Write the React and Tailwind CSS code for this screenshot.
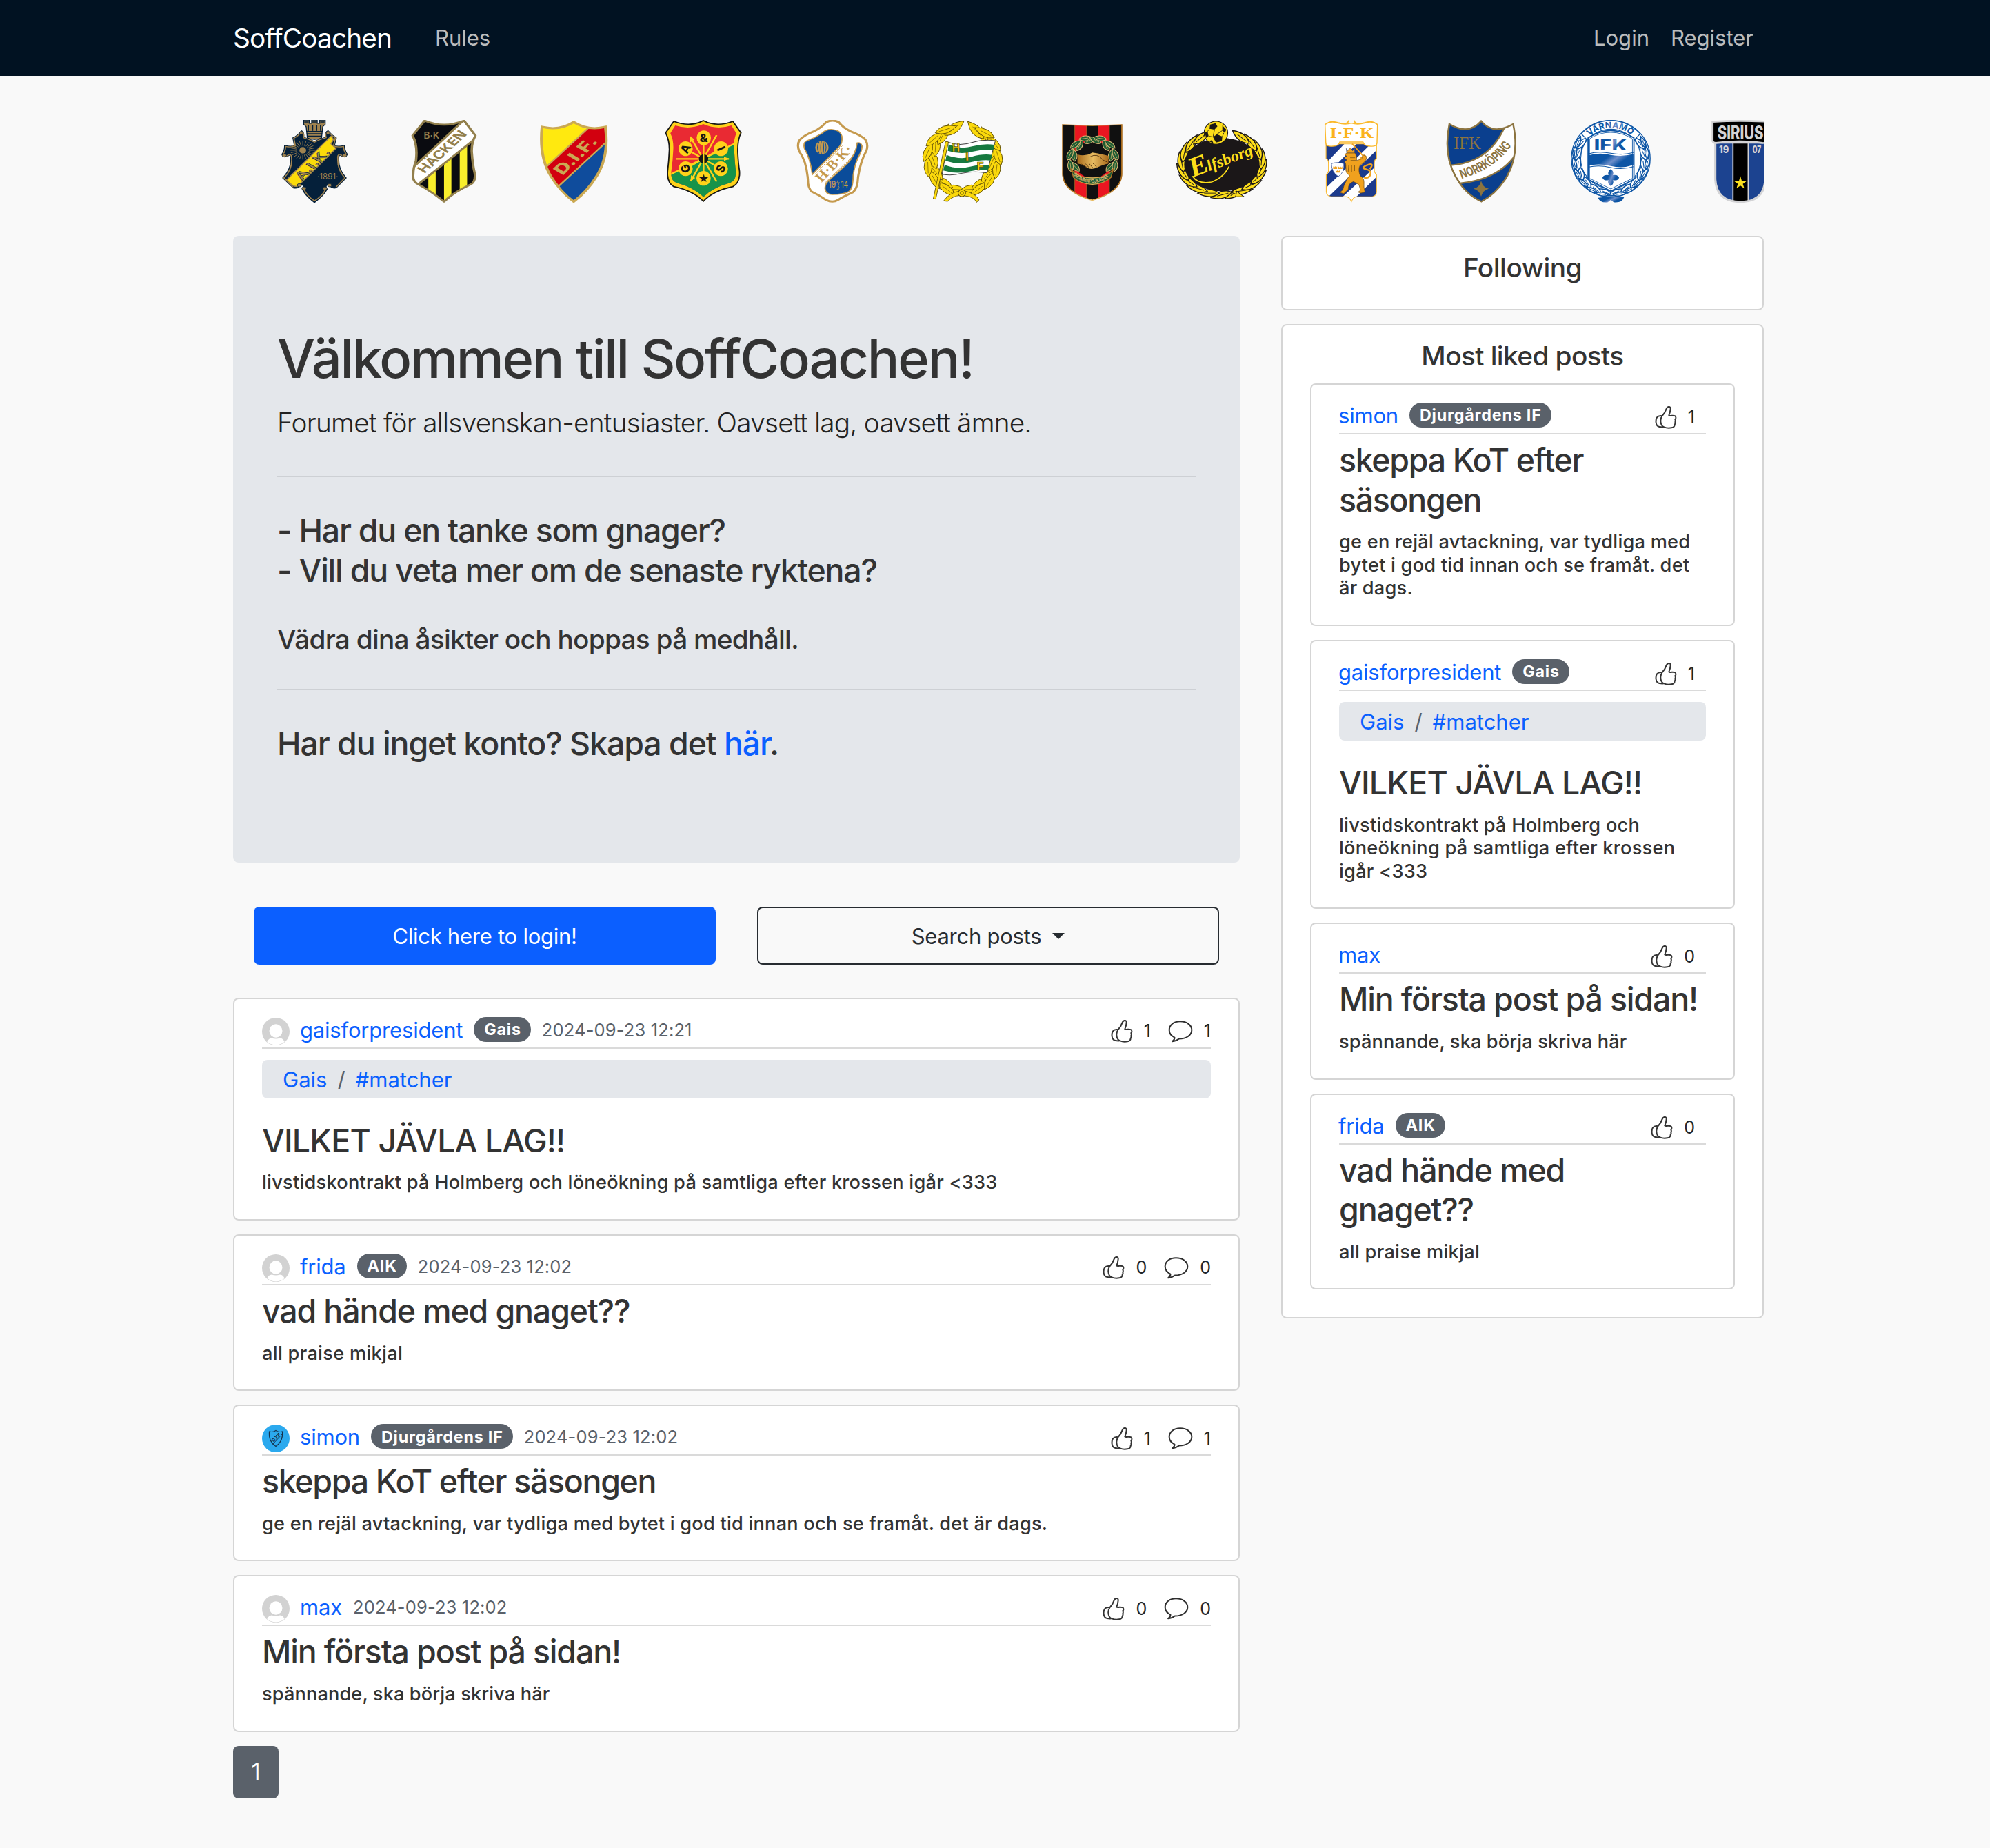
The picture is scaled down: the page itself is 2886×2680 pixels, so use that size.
import { Fragment } from 'react';

/* ---------- Club crests ---------- */

const SANS = 'Inter, "Liberation Sans", sans-serif';
const SERIF = '"Liberation Serif", serif';

function Crest({ box, label, children }) {
  return (
    <svg
      viewBox={box}
      preserveAspectRatio="none"
      className="h-[120px] w-[188px] shrink-0 overflow-visible"
      role="img"
      aria-label={label}
    >
      {children}
    </svg>
  );
}

/* Leaves laid out along an ellipse; `lean` tilts each leaf from the tangent. */
function Leaves({ cx, cy, rx, ry, from, to, count, length, width, lean = 0, ...paint }) {
  const items = [];
  for (let i = 0; i < count; i += 1) {
    const a = ((from + ((to - from) * i) / Math.max(1, count - 1)) * Math.PI) / 180;
    const x = cx + rx * Math.cos(a);
    const y = cy + ry * Math.sin(a);
    const dir = to > from ? 1 : -1;
    const t = (Math.atan2(dir * ry * Math.cos(a), -dir * rx * Math.sin(a)) * 180) / Math.PI + lean;
    items.push(
      <g key={i} transform={`translate(${x.toFixed(1)} ${y.toFixed(1)}) rotate(${t.toFixed(1)})`}>
        <path
          d={`M${-length / 2} 0 Q${-length * 0.1} ${-width} ${length / 2} 0 Q${-length * 0.1} ${width} ${-length / 2} 0Z`}
          {...paint}
        />
        <path d={`M${-length / 3} 0 L${length / 5} 0`} fill="none" stroke={paint.stroke} strokeWidth={paint.strokeWidth * 0.7} />
      </g>,
    );
  }
  return <>{items}</>;
}

function Aik() {
  const gold = '#a08350';
  const navy = '#05203a';
  const rays = Array.from({ length: 24 }, (_, i) => i * 15);
  return (
    <Crest box="71.4 522 421.1 360" label="AIK">
      <path d="M247 523h18v14h8v-14h18v14h8v-14h18v18l-8 10-4 49q-22 14-46 0l-4-49-8-10z" fill={gold} stroke={navy} strokeWidth="3" />
      <path d="M249 531h14M274 531h16M301 531h14M257 572h50M257 582h50M258 592h47M262 545v24M276 545v24M289 545v24M302 545v24" stroke={navy} strokeWidth="4" fill="none" />
      <path
        d="M240 570Q248 574 246 598Q266 604 282 617Q298 604 320 598Q317 574 326 570Q338 590 352 600L346 634Q360 640 378 634Q380 658 388 672Q378 690 366 674Q360 672 360 690Q358 735 384 774L352 817Q338 822 328 800Q314 806 322 824Q310 852 282 880Q254 852 244 824Q252 806 238 800Q230 822 214 817L180 774Q208 735 206 690Q206 672 200 674Q186 690 177 672Q186 658 186 634Q206 640 218 634L213 600Q228 592 240 570Z"
        fill={navy} stroke={navy} strokeWidth="5"
      />
      <path
        d="M240 572Q250 580 246 599Q266 606 282 619Q298 606 320 599Q315 580 326 572Q338 590 350 601L344 635Q360 643 376 637Q378 660 386 672Q378 686 366 672Q356 670 358 692Q356 737 381 774L352 814M213 814L183 774Q210 737 208 692Q208 670 200 672Q186 686 179 672Q188 660 188 637Q206 643 220 635L215 601Q230 592 240 572M248 824Q258 852 282 874Q308 852 318 824"
        fill="none" stroke={gold} strokeWidth="4"
      />
      <g stroke={gold} strokeWidth="2">
        {rays.map((r) => (
          <path key={r} d="M0 -20V-40" transform={`translate(244 654) rotate(${r})`} />
        ))}
      </g>
      <ellipse cx="244" cy="654" rx="11" ry="14" fill={gold} />
      <path d="M192 782L336 592L344 606L336 626L352 646L226 812Q208 812 192 782Z" fill="#fbdb0a" stroke={gold} strokeWidth="4" />
      <text transform="translate(241 786) rotate(-53)" fontFamily={SANS} fontWeight="700" fontSize="44" textLength="156" lengthAdjust="spacingAndGlyphs" fill={gold} stroke={navy} strokeWidth="1.5">A.I.K.</text>
      <text x="291" y="779" fontFamily={SANS} fontSize="34" textLength="68" lengthAdjust="spacingAndGlyphs" fill={gold}>·1891·</text>
      <g fill={gold} stroke={navy} strokeWidth="2">
        <circle cx="239" cy="579" r="6" /><circle cx="326" cy="579" r="6" />
        <circle cx="184" cy="676" r="7" /><circle cx="380" cy="676" r="7" />
        <circle cx="233" cy="806" r="7" /><circle cx="331" cy="806" r="7" />
        <circle cx="248" cy="820" r="7" /><circle cx="316" cy="820" r="7" />
      </g>
    </Crest>
  );
}

function Hacken() {
  const outline = 'M640 525Q703 560 768 525L805 590Q792 620 793 660Q796 720 803 755Q806 790 790 802Q735 835 703 877Q665 835 618 801Q600 788 603 760Q603 730 612 700Q618 630 601 590Z';
  return (
    <Crest box="492.6 522 421.1 360" label="BK Häcken">
      <clipPath id="hacken-clip"><path d={outline} /></clipPath>
      <path d={outline} fill="#0a0b10" />
      <g clipPath="url(#hacken-clip)">
        <path d="M652 500h24v400h-24zM703 500h24v400h-24zM754 500h24v400h-24z" fill="#f9ee2c" />
        <path d="M590 500H780L600 730Z" fill="#0a0b10" />
        <path d="M590 744L768 522L815 592L617 804L585 790Z" fill="#fff" stroke="#93804d" strokeWidth="8" />
      </g>
      <path d={outline} fill="none" stroke="#93804d" strokeWidth="8" strokeLinejoin="round" />
      <text x="637" y="602" fontFamily={SANS} fontWeight="600" fontSize="38" textLength="51" lengthAdjust="spacingAndGlyphs" fill="#93804d">B·K</text>
      <text transform="translate(640 757) rotate(-51)" fontFamily={SANS} fontWeight="700" fontSize="48" textLength="222" lengthAdjust="spacingAndGlyphs" fill="#93804d">HÄCKEN</text>
    </Crest>
  );
}

function Djurgarden() {
  const outline = 'M1022 552Q1080 570 1125 531Q1170 570 1228 552Q1240 680 1200 765Q1170 832 1125 877Q1080 832 1050 765Q1012 680 1022 552Z';
  return (
    <Crest box="914.4 522 421.1 360" label="Djurgårdens IF">
      <clipPath id="dif-clip"><path d={outline} /></clipPath>
      <g clipPath="url(#dif-clip)">
        <path d="M1000 520h250v370h-250z" fill="#ffe90f" />
        <path d="M1240 610L1060 825V890H1250Z" fill="#0f4c9c" />
        <path d="M1178 550L1030 733L1072 815L1250 594V530Z" fill="#d2000f" stroke="#cba953" strokeWidth="6" />
      </g>
      <path d={outline} fill="none" stroke="#cba953" strokeWidth="9" />
      <text transform="translate(1089 765) rotate(-52)" fontFamily={SANS} fontWeight="800" fontSize="60" textLength="190" lengthAdjust="spacingAndGlyphs" fill="#cba953">D.I.F.</text>
    </Crest>
  );
}

function Gais() {
  const outline = 'M160 78Q225 105 280 75Q335 105 400 78L433 128Q418 160 420 215Q422 260 427 295Q430 345 400 362Q320 380 280 426Q240 380 160 362Q132 345 135 295Q140 250 142 200Q142 160 127 128Z';
  const inner = 'M166 96Q225 116 280 90Q335 116 394 96L414 130Q400 165 406 215Q408 260 412 295Q414 335 390 345Q320 365 280 407Q240 365 170 345Q146 335 150 295Q156 250 158 200Q160 160 146 130Z';
  const discs = [[282, 150, '&', 0], [352, 197, 'I', 64], [351, 284, 'S', -62], [281, 326, '★', 0], [208, 284, 'G', -116], [208, 197, 'A', -64]];
  return (
    <Crest box="16.8 72 526.4 360" label="Gais">
      <clipPath id="gais-clip"><path d={inner} /></clipPath>
      <path d={outline} fill="#ffd21a" stroke="#161616" strokeWidth="5" />
      <g clipPath="url(#gais-clip)">
        <path d="M130 80h300v350h-300z" fill="#e92a33" />
        <path d="M120 322L440 158V440H120Z" fill="#15934a" stroke="#ffd21a" strokeWidth="7" />
      </g>
      <path d="M170 241H384M227 145L334 340M334 138L229 338M281 150V326M208 197L351 284M352 197L208 284" stroke="#ffd21a" strokeWidth="7" />
      <path d="M386 241l-22-9v18zM224 140l2 30 18-13zM228 340l2-28 17 12z" fill="#ffd21a" />
      {discs.map(([x, y, t, r]) => (
        <g key={t}>
          <ellipse cx={x} cy={y} rx="29" ry="32" fill="#ffd21a" />
          <text transform={`translate(${x} ${y}) rotate(${r})`} y="17" textAnchor="middle" fontFamily={t === '★' ? '"DejaVu Sans", sans-serif' : SANS} fontWeight="800" fontSize="48" fill="#161616">{t}</text>
        </g>
      ))}
      <ellipse cx="281" cy="241" rx="19" ry="20" fill="#161616" />
      <path d="M281 222v38" stroke="#ffd21a" strokeWidth="6" />
    </Crest>
  );
}

function Halmstad() {
  const gold = '#c59a4e';
  return (
    <Crest box="544.7 72 526.4 360" label="Halmstads BK">
      <path d="M780 82Q806 68 832 82Q848 105 880 122Q925 140 940 158Q952 180 944 205Q920 250 910 320Q908 370 890 386Q850 405 828 420Q806 434 780 420Q755 400 722 384Q706 368 706 330Q700 250 672 210Q660 182 672 160Q690 138 730 122Q762 105 780 82Z" fill="#fff" stroke={gold} strokeWidth="9" />
      <path d="M697 165Q735 150 766 128Q780 112 806 114Q838 116 844 142Q848 170 834 188L724 309Q716 240 692 196Q686 176 697 165Z" fill="#0a4c9a" stroke={gold} strokeWidth="5" />
      <path d="M906 172Q922 168 926 186Q926 205 910 236Q896 268 890 312Q890 370 872 384Q850 396 806 396Q778 396 776 372Q774 350 792 334L866 262Q902 220 906 172Z" fill="#0a4c9a" stroke={gold} strokeWidth="5" />
      <ellipse cx="763" cy="192" rx="27" ry="30" fill={gold} />
      <path d="M752 166Q738 192 752 218M761 163Q755 192 761 221M774 166Q786 192 774 218M767 163Q773 192 767 221" stroke="#0a4c9a" strokeWidth="3" fill="none" />
      <path d="M735 308L846 184M776 345L896 222" stroke={gold} strokeWidth="2.5" />
      <text transform="translate(762 345) rotate(-48)" fontFamily={SERIF} fontWeight="700" fontSize="60" textLength="192" lengthAdjust="spacingAndGlyphs" fill={gold}>H·B·K·</text>
      <text x="790" y="367" fontFamily={SANS} fontWeight="500" fontSize="38" textLength="30" lengthAdjust="spacingAndGlyphs" fill={gold}>19</text>
      <text x="840" y="367" fontFamily={SANS} fontWeight="500" fontSize="38" textLength="30" lengthAdjust="spacingAndGlyphs" fill={gold}>14</text>
      <path d="M829 333q-6 8 0 12t0 12q8 6 0 18m-5-2h7M822 345h14" stroke={gold} strokeWidth="2.5" fill="none" />
    </Crest>
  );
}

function Hammarby() {
  const leaf = { fill: '#fbd90c', stroke: '#5a4a08', strokeWidth: 2.5 };
  return (
    <Crest box="1069.8 72 526.4 360" label="Hammarby IF">
      <Leaves cx={1333} cy={242} rx={122} ry={140} from={110} to={254} count={7} length={100} width={38} lean={-20} {...leaf} />
      <Leaves cx={1333} cy={242} rx={144} ry={146} from={118} to={242} count={6} length={92} width={32} lean={10} {...leaf} />
      <Leaves cx={1333} cy={242} rx={122} ry={140} from={70} to={-64} count={7} length={100} width={38} lean={20} {...leaf} />
      <Leaves cx={1333} cy={242} rx={144} ry={146} from={62} to={-52} count={6} length={92} width={32} lean={-10} {...leaf} />
      <path d="M1272 168Q1320 188 1370 170Q1420 155 1466 162L1432 302Q1380 292 1330 304Q1290 316 1250 308Z" fill="#fff" stroke="#444" strokeWidth="3" />
      <path d="M1276 178Q1325 202 1375 186Q1420 174 1462 180L1457 204Q1420 198 1372 210Q1325 224 1273 206ZM1268 224Q1320 246 1370 232Q1415 218 1453 224L1447 248Q1410 244 1365 256Q1315 268 1263 250ZM1260 268Q1310 288 1360 276Q1400 264 1442 268L1436 290Q1395 286 1355 297Q1305 308 1254 292Z" fill="#16793f" />
      <path d="M1264 166l12 2-52 248-10-2z" fill="#fbd90c" stroke="#5a4a08" strokeWidth="2.5" />
      <g fontFamily={SANS} fontWeight="800" fontSize="46" fill="#fbd90c" stroke="#4a3d08" strokeWidth="2">
        <text x="1291" y="211" textLength="31" lengthAdjust="spacingAndGlyphs">H</text>
        <text x="1345" y="250">I</text>
        <text x="1391" y="291" textLength="27" lengthAdjust="spacingAndGlyphs">F</text>
      </g>
      <path d="M1318 382Q1280 388 1256 424L1272 426Q1294 402 1324 400ZM1340 380Q1390 394 1400 420L1390 430Q1378 404 1340 402Z" fill="#fbd90c" stroke="#5a4a08" strokeWidth="2.5" />
      <circle cx="1330" cy="390" r="15" fill="#fbd90c" stroke="#5a4a08" strokeWidth="3" />
      <circle cx="1330" cy="390" r="7" fill="none" stroke="#5a4a08" strokeWidth="2" />
    </Crest>
  );
}

function Brommapojkarna() {
  const outline = 'M170 93Q290 98 410 93V305Q410 385 290 421Q170 385 170 305Z';
  const leaf = { fill: '#1f5c33', stroke: '#d9b875', strokeWidth: 3 };
  return (
    <Crest box="26.8 72 526.4 360" label="IF Brommapojkarna">
      <linearGradient id="bp-gold"><stop offset="0" stopColor="#a86a1c" /><stop offset="0.5" stopColor="#e9bd62" /><stop offset="1" stopColor="#a86a1c" /></linearGradient>
      <clipPath id="bp-clip"><path d={outline} /></clipPath>
      <g clipPath="url(#bp-clip)">
        <path d="M160 80h260v350h-260z" fill="#101010" />
        <path d="M219 80h48v350h-48zM314 80h46v350h-46z" fill="#ea1621" stroke="#b0762c" strokeWidth="2" />
      </g>
      <ellipse cx="292" cy="243" rx="78" ry="82" fill="#101010" />
      <Leaves cx={292} cy={243} rx={78} ry={84} from={158} to={262} count={4} length={54} width={24} lean={-20} {...leaf} />
      <Leaves cx={292} cy={243} rx={94} ry={96} from={164} to={252} count={4} length={54} width={22} lean={10} {...leaf} />
      <Leaves cx={292} cy={243} rx={78} ry={84} from={22} to={-82} count={4} length={54} width={24} lean={20} {...leaf} />
      <Leaves cx={292} cy={243} rx={94} ry={96} from={16} to={-72} count={4} length={54} width={22} lean={-10} {...leaf} />
      <path d="M230 222Q262 232 290 214Q330 220 356 228V262Q330 268 316 276Q290 292 268 280Q250 264 230 262Z" fill="url(#bp-gold)" />
      <path d="M282 232Q310 214 334 246L352 256M246 264l22 14M262 262l18 20M276 260l18 22M290 258l18 18" stroke="#4a2b0b" strokeWidth="2.5" fill="none" />
      <path d="M203 284Q226 324 290 324Q354 324 376 284L366 322Q336 352 290 352Q240 350 214 322Z" fill="#1f5c33" stroke="url(#bp-gold)" strokeWidth="4" />
      <path id="bp-arc" d="M212 310Q240 344 290 346Q342 344 370 308" fill="none" />
      <text fontFamily={SANS} fontWeight="600" fontSize="23" fill="#d9b875"><textPath href="#bp-arc" textLength="164" lengthAdjust="spacingAndGlyphs">BROMMAPOJKARNA</textPath></text>
      <path d={outline} fill="none" stroke="url(#bp-gold)" strokeWidth="5" />
    </Crest>
  );
}

function Elfsborg() {
  const leaf = { fill: '#fddd1a', stroke: '#1b1718', strokeWidth: 4 };
  return (
    <Crest box="554.8 72 526.4 360" label="IF Elfsborg">
      <Leaves cx={818} cy={264} rx={164} ry={134} from={72} to={240} count={10} length={88} width={30} lean={-16} {...leaf} />
      <Leaves cx={818} cy={264} rx={164} ry={134} from={60} to={-62} count={8} length={88} width={30} lean={16} {...leaf} />
      <ellipse cx="818" cy="266" rx="153" ry="116" fill="#1b1718" />
      <path d="M878 382l30 24h-34z" fill="#fddd1a" stroke="#1b1718" strokeWidth="3" />
      <ellipse cx="794" cy="128" rx="48" ry="50" fill="#fddd1a" stroke="#1b1718" strokeWidth="3" />
      <path d="M770 92l22-6 8 14-12 14-20-4zM820 96l16 18-6 14-10-10zM782 146l16-12 22 10-2 20-24 6zM748 124l12-2 4 20-10 8zM764 164l14-4 6 14z" fill="#1b1718" />
      <path d="M788 114l-6 32M820 118l-22 16M764 142l18 4M826 128l-6 16M768 110l-8 12" stroke="#1b1718" strokeWidth="2.5" />
      <path d="M700 318Q720 352 776 342Q826 322 846 276" fill="none" stroke="#fddd1a" strokeWidth="5" strokeLinecap="round" />
      <text transform="translate(700 322) rotate(-22)" fontFamily={SERIF} fontStyle="italic" fontWeight="700" fontSize="68" fill="#fddd1a"><tspan fontSize="120">E</tspan><tspan dx="-8">lfsborg</tspan></text>
    </Crest>
  );
}

function Goteborg() {
  const body = 'M1242 176H1447V240Q1438 244 1438 260V290Q1438 302 1447 308V385Q1446 402 1430 406H1365Q1352 408 1345 428Q1338 408 1325 406H1262Q1244 402 1243 385V308Q1252 302 1252 290V260Q1252 244 1242 240Z';
  return (
    <Crest box="1082.2 72 526.4 360" label="IFK Göteborg">
      <clipPath id="gbg-clip"><path d={body} /></clipPath>
      <path d={body} fill="#fff" />
      <g clipPath="url(#gbg-clip)" fill="#1c3a8c">
        <path d="M1235 170H1322L1235 268Z" />
        <path d="M1235 320L1372 170H1430L1235 375Z" />
        <path d="M1460 190V258L1310 406H1252Z" />
        <path d="M1460 306V420H1352Z" />
      </g>
      <path d={body} fill="none" stroke="#fbb92b" strokeWidth="3" />
      <path d="M1240 92Q1260 72 1292 84Q1330 96 1334 74M1450 92Q1430 72 1398 84Q1360 96 1356 74" fill="none" stroke="#fbb92b" strokeWidth="5" />
      <path d="M1238 92Q1262 74 1292 86Q1320 94 1345 86Q1370 94 1398 86Q1428 74 1451 92L1449 168Q1450 190 1420 186Q1398 186 1392 168H1298Q1292 186 1270 186Q1240 190 1241 168Z" fill="#fff" stroke="#fbb92b" strokeWidth="4" />
      <text x="1258" y="149" fontFamily={SERIF} fontWeight="700" fontSize="66" textLength="178" lengthAdjust="spacingAndGlyphs" fill="#fbb31d">I·F·K</text>
      <path d="M1348 176L1396 232M1380 240l20-16" stroke="#f0a11e" strokeWidth="5" />
      <path d="M1324 196l6 10 10-14 10 14 8-10v20h-32z" fill="#f0a11e" stroke="#20408f" strokeWidth="1.5" />
      <path d="M1326 216h34q8 12 6 32l20-6 6-18 12 4q6 14-6 26l-20 18q-6 26 4 44 16 10 14 32-2 16 4 38l-16 4-12-4 10-8-6-24-22-14q-22 6-22 34l-18 18-16-4 12-12q4-20 12-34 8-20 16-28l-14-14-2-36-4-10 8-8-10-10 10-6-8-8z" fill="#f0a11e" stroke="#6b4712" strokeWidth="2" />
      <path d="M1396 322q20 6 26-12t-18-24 6-18 10 18" fill="none" stroke="#f0a11e" strokeWidth="7" />
      <path d="M1340 236h20M1342 248h20M1322 268l-2 26M1334 270l-2 28M1346 270v28M1358 268v26" stroke="#6b4712" strokeWidth="2" />
      <path d="M1264 262Q1290 252 1314 262Q1318 300 1292 318Q1264 300 1264 262Z" fill="#fff" stroke="#20408f" strokeWidth="2" />
      <path d="M1271 274l4 5 4-6 4 6 4-5v11h-16zM1292 274l4 5 4-6 4 6 4-5v11h-16zM1282 290l4 5 4-6 4 6 4-5v11h-16z" fill="#f0a11e" />
    </Crest>
  );
}

function Norrkoping() {
  const outline = 'M173 90Q250 140 302 77Q350 140 432 90Q460 230 400 330Q360 395 303 427Q240 395 205 330Q146 230 173 90Z';
  return (
    <Crest box="38.8 72 526.4 360" label="IFK Norrköping">
      <clipPath id="nkpg-clip"><path d={outline} /></clipPath>
      <g clipPath="url(#nkpg-clip)">
        <path d="M140 60h320v380h-320z" fill="#0a3f8e" />
        <path d="M170 269Q330 262 396 106L450 70V210Q380 330 215 348Z" fill="#fff" stroke="#8c7440" strokeWidth="7" />
      </g>
      <path d={outline} fill="none" stroke="#8c7440" strokeWidth="7" />
      <text x="190" y="198" fontFamily={SERIF} fontSize="78" textLength="112" lengthAdjust="spacingAndGlyphs" fill="#8c7440">IFK</text>
      <path id="nkpg-arc" d="M222 328Q362 286 430 176" fill="none" />
      <text fontFamily={SANS} fontWeight="700" fontSize="54" fill="#8c7440"><textPath href="#nkpg-arc" textLength="256" lengthAdjust="spacingAndGlyphs">NORRKÖPING</textPath></text>
      <path d="M302 337Q308 366 333 371Q308 378 302 405Q296 378 271 371Q296 366 302 337Z" fill="#8c7440" />
    </Crest>
  );
}

function Varnamo() {
  const leaf = { fill: '#fff', stroke: '#0d55a5', strokeWidth: 4.5 };
  return (
    <Crest box="564.8 72 526.4 360" label="IFK Värnamo">
      <linearGradient id="vmo" x2="1" y2="0.4"><stop offset="0" stopColor="#0d55a5" /><stop offset="0.45" stopColor="#0d55a5" /><stop offset="0.65" stopColor="#6f8fca" /><stop offset="0.85" stopColor="#0d55a5" /></linearGradient>
      <ellipse cx="828" cy="240" rx="160" ry="166" fill="#fff" stroke="#0d55a5" strokeWidth="4" />
      <path d="M776 410q10 24 40 20l12-10 12 10q34 4 42-22l-54-4z" fill="url(#vmo)" />
      <Leaves cx={828} cy={242} rx={134} ry={146} from={100} to={208} count={7} length={62} width={24} lean={14} {...leaf} />
      <Leaves cx={828} cy={242} rx={149} ry={157} from={104} to={208} count={7} length={52} width={16} lean={-6} {...leaf} />
      <Leaves cx={828} cy={242} rx={134} ry={146} from={80} to={-28} count={7} length={62} width={24} lean={-14} {...leaf} />
      <Leaves cx={828} cy={242} rx={149} ry={157} from={76} to={-28} count={7} length={52} width={16} lean={6} {...leaf} />
      <ellipse cx="828" cy="240" rx="122" ry="130" fill="#fff" stroke="#0d55a5" strokeWidth="3" />
      <path d="M708 132Q760 76 828 74Q896 76 948 132L924 158Q880 112 828 112Q776 112 732 158Z" fill="#fff" stroke="#0d55a5" strokeWidth="3.5" />
      <path id="vmo-arc" d="M742 142Q780 107 828 107Q876 107 918 142" fill="none" />
      <text fontFamily={SANS} fontWeight="700" fontSize="36" fill="url(#vmo)"><textPath href="#vmo-arc" textLength="186" lengthAdjust="spacingAndGlyphs">VÄRNAMO</textPath></text>
      <path d="M736 150Q780 118 828 118Q876 118 922 150V330L828 382L736 330Z" fill="#fff" stroke="#0d55a5" strokeWidth="5" />
      <path d="M742 154Q780 126 828 126Q876 126 916 154V326L828 372L742 326Z" fill="#fff" stroke="#0d55a5" strokeWidth="2.5" />
      <text x="760" y="203" fontFamily={SANS} fontWeight="800" fontSize="66" textLength="133" lengthAdjust="spacingAndGlyphs" fill="url(#vmo)">IFK</text>
      <path d="M738 226Q780 212 828 224Q876 234 920 220V268Q876 284 828 272Q780 260 738 270Z" fill="url(#vmo)" />
      <path d="M738 219Q780 206 828 217Q876 227 920 214M738 277Q780 267 828 279Q876 290 920 275" fill="none" stroke="#0d55a5" strokeWidth="3" />
      <path d="M828 286Q842 296 837 312Q856 308 862 323Q856 338 837 334Q842 350 828 359Q814 350 819 334Q800 338 794 323Q800 308 819 312Q814 296 828 286Z" fill="url(#vmo)" />
    </Crest>
  );
}

function Sirius() {
  const body = 'M1253 170H1456V330Q1452 428 1355 428Q1258 428 1253 330Z';
  return (
    <Crest box="1091.8 72 526.4 360" label="IK Sirius">
      <clipPath id="sirius-clip"><path d={body} /></clipPath>
      <g clipPath="url(#sirius-clip)">
        <path d="M1240 160h230v280h-230z" fill="#1c4390" />
        <path d="M1325 160h62v280h-62z" fill="#000" stroke="#d3d3d5" strokeWidth="5" />
      </g>
      <path d={body} fill="none" stroke="#d3d3d5" strokeWidth="9" />
      <path d="M1242 80Q1355 72 1468 80V164Q1450 174 1444 172Q1355 158 1255 172Q1244 172 1242 164Z" fill="#000" stroke="#d3d3d5" strokeWidth="8" />
      <text x="1262" y="155" fontFamily={SANS} fontWeight="800" fontSize="80" textLength="187" lengthAdjust="spacingAndGlyphs" fill="#d3d3d5">SIRIUS</text>
      <g fontFamily={SANS} fontWeight="800" fontSize="42" fill="#d3d3d5">
        <text x="1268" y="215" textLength="40" lengthAdjust="spacingAndGlyphs">19</text>
        <text x="1404" y="215" textLength="36" lengthAdjust="spacingAndGlyphs">07</text>
      </g>
      <path d="M1355 316L1361 338H1380L1365 350L1371 370L1355 358L1339 370L1345 350L1330 338H1349Z" fill="#fadf20" />
    </Crest>
  );
}

const CRESTS = [Aik, Hacken, Djurgarden, Gais, Halmstad, Hammarby, Brommapojkarna, Elfsborg, Goteborg, Norrkoping, Varnamo, Sirius];

/* ---------- Small icons ---------- */

function ThumbIcon() {
  return (
    <svg viewBox="930 598 96 99" className="h-[33px] w-[32px]" fill="none" stroke="#333" strokeWidth="6" strokeLinejoin="round">
      <path d="M962 640Q974 628 979 612Q983 602 989 601Q999 600 998 610Q997 624 991 638Q993 641 1004 639Q1021 638 1021 647Q1022 652 1018 655Q1021 662 1018 667Q1020 674 1016 678Q1016 690 1002 692Q984 695 970 689Q956 684 955 664Q954 650 962 640Z" />
      <path d="M962 641Q946 638 939 647Q933 657 935 670Q937 686 950 688Q960 690 968 689" />
    </svg>
  );
}

function CommentIcon() {
  return (
    <svg viewBox="1179 600 107 95" className="h-[32px] w-[36px]" fill="none" stroke="#2e2e2e" strokeWidth="6" strokeLinejoin="round">
      <path d="M1231 604C1260 604 1281 619 1281 641C1281 664 1258 678 1226 679Q1214 689 1197 690Q1208 682 1207 673C1192 666 1184 655 1184 641C1184 619 1204 604 1231 604Z" />
    </svg>
  );
}

function Avatar({ club }) {
  if (club) {
    return (
      <svg viewBox="0 0 40 40" className="mt-[6px] h-10 w-10">
        <circle cx="20" cy="20" r="20" fill="#2ba9ee" />
        <path d="M10.500 10Q16 11.500 20 8.500Q24 11.500 29.500 10Q31 24 20 31.500Q9 24 10.500 10Z" fill="none" stroke="#15324d" strokeWidth="1.100" />
        <path d="M25 11L12.500 23.500M29.500 13.500L15.500 28.500" stroke="#15324d" strokeWidth="0.900" />
        <text transform="translate(17 25.500) rotate(-46)" fontFamily={SANS} fontWeight="700" fontSize="6.500" textLength="15" fill="#15324d">D.I.F</text>
      </svg>
    );
  }
  return (
    <svg viewBox="0 0 40 40" className="mt-[6px] h-10 w-10">
      <clipPath id="avatar-clip"><circle cx="20" cy="20" r="19.500" /></clipPath>
      <circle cx="20" cy="20" r="20" fill="#d2d2d2" />
      <g clipPath="url(#avatar-clip)" fill="#fff">
        <ellipse cx="20" cy="19" rx="9.500" ry="9.700" />
        <path d="M5 42Q7 30 14 29.500Q20 31.500 26 29.500Q33 30 35 42Z" />
      </g>
    </svg>
  );
}

/* ---------- Posts ---------- */

const POSTS = {
  gais: {
    user: 'gaisforpresident', team: 'Gais', date: '2024-09-23 12:21', likes: 1, comments: 1, crumbs: ['Gais', '#matcher'],
    title: 'VILKET JÄVLA LAG!!', titleClass: 'tracking-[-0.0193em]',
    body: 'livstidskontrakt på Holmberg och löneökning på samtliga efter krossen igår <333', bodyClass: 'tracking-[0.0088em]',
  },
  frida: {
    user: 'frida', team: 'AIK', date: '2024-09-23 12:02', likes: 0, comments: 0,
    title: 'vad hände med gnaget??', titleClass: 'tracking-[-0.0248em]', body: 'all praise mikjal', bodyClass: 'tracking-[0.011em]',
  },
  simon: {
    user: 'simon', team: 'Djurgårdens IF', date: '2024-09-23 12:02', likes: 1, comments: 1, clubAvatar: true,
    title: 'skeppa KoT efter säsongen', titleClass: 'tracking-[-0.0285em]',
    body: 'ge en rejäl avtackning, var tydliga med bytet i god tid innan och se framåt. det är dags.', bodyClass: 'tracking-[0.0078em]',
  },
  max: {
    user: 'max', date: '2024-09-23 12:02', likes: 0, comments: 0,
    title: 'Min första post på sidan!', titleClass: 'tracking-[-0.025em]', body: 'spännande, ska börja skriva här', bodyClass: 'tracking-[0.0041em]',
  },
};

function Count({ icon, value }) {
  return (
    <span className="flex items-center gap-4">
      {icon}
      <span className="text-[25px] leading-none text-[#212529]">{value}</span>
    </span>
  );
}

function PostCard({ post, compact = false }) {
  return (
    <article className="mb-5 rounded-lg border-2 border-[#d5d5d5] bg-white px-10 pt-[18px] pb-5">
      <header className="flex h-[54px] items-center justify-between border-b-2 border-[#dadada]">
        <div className="flex items-center gap-4">
          {!compact && <Avatar club={post.clubAvatar} />}
          <a className="-ml-px pt-[2px] text-[31px] leading-[48px] tracking-[-0.006em] text-[#0a60ff]">{post.user}</a>
          {post.team && (
            <span className="flex h-9 items-center rounded-full bg-[#5a616a] pr-[14px] pl-[15px] text-[23.300px] leading-none font-bold tracking-[0.034em] text-white">
              {post.team}
            </span>
          )}
          {!compact && <span className="pt-px text-[25.500px] leading-none tracking-[0.006em] text-[#5a616a]">{post.date}</span>}
        </div>
        <div className={compact ? 'mt-[7px] mr-4 flex items-center' : 'mt-[6px] flex items-center gap-[25px]'}>
          <Count icon={<ThumbIcon />} value={post.likes} />
          {!compact && <Count icon={<CommentIcon />} value={post.comments} />}
        </div>
      </header>
      {post.crumbs && (
        <nav className="mt-4 mb-8 flex h-14 items-center gap-[15px] rounded-lg bg-[#e4e7eb] pt-[2px] pl-[30px] text-[31px] text-[#0a60ff]">
          {post.crumbs.map((c, i) => (
            <Fragment key={c}>
              {i > 0 && <span className="text-[#5a616a]">/</span>}
              <a>{c}</a>
            </Fragment>
          ))}
        </nav>
      )}
      <h4 className={`mt-2 pt-px text-[46.500px] leading-[57.600px] font-medium text-[#333] ${post.titleClass}`}>{post.title}</h4>
      <h6 className={`mt-[15px] mb-4 text-[27.200px] leading-[33.600px] font-medium text-[#333] ${post.bodyClass}`}>{post.body}</h6>
    </article>
  );
}

/* ---------- Page ---------- */

export default function App() {
  return (
    <div className="min-h-[2680px] bg-[#f9f9f9] font-['Inter','Liberation_Sans',sans-serif] text-[#333]">
      <nav className="h-[110px] bg-[#011222] pl-[338px]">
        <div className="flex h-full w-[2220px] items-center text-[31px] text-[#bbbcbd]">
          <a className="w-[293px] text-[38.800px] tracking-[-0.0228em] text-white">SoffCoachen</a>
          <a>Rules</a>
          <div className="mr-[15px] ml-auto flex gap-[31px]">
            <a>Login</a>
            <a>Register</a>
          </div>
        </div>
      </nav>

      <main className="ml-[338px] w-[2220px]">
        <div className="mt-16 mb-12 flex h-[120px] overflow-hidden pl-6">
          {CRESTS.map((Logo, i) => (
            <Logo key={i} />
          ))}
        </div>

        <div className="flex items-start justify-between">
          <section className="w-[1460px]">
            <div className="mb-16 rounded-lg bg-[#e4e7eb] px-16 py-32">
              <h1 className="mb-[14px] pt-[2px] text-[77.600px] leading-[96px] font-medium tracking-[-0.0285em]">Välkommen till SoffCoachen!</h1>
              <p className="-mb-px pt-px text-[38.800px] leading-[60px] font-light tracking-[-0.0193em] text-[#222]">
                Forumet för allsvenskan-entusiaster. Oavsett lag, oavsett ämne.
              </p>
              <hr className="mt-12 mb-[49px] border-t-2 border-[#cdd0d4]" />
              <h4 className="-mb-px text-[46.500px] leading-[57.600px] font-medium tracking-[-0.0268em]">
                - Har du en tanke som gnager?
                <br />- Vill du veta mer om de senaste ryktena?
              </h4>
              <h5 className="mt-12 text-[38.800px] leading-[48px] font-medium tracking-[-0.0192em]">Vädra dina åsikter och hoppas på medhåll.</h5>
              <hr className="my-12 border-t-2 border-[#cdd0d4]" />
              <h4 className="mb-[15px] pt-px text-[46.500px] leading-[57.600px] font-medium tracking-[-0.0235em]">
                Har du inget konto? Skapa det <a className="text-[#0a60ff]">här</a>.
              </h4>
            </div>

            <div className="mb-12 grid grid-cols-2 gap-[60px] px-[30px] text-[31px] tracking-[-0.008em]">
              <button className="h-[84px] rounded-lg bg-[#0b5fff] pt-[2px] text-white">Click here to login!</button>
              <button className="flex h-[84px] items-center justify-center gap-4 rounded-lg border-2 border-[#272c31] pt-[2px] text-[#272c31]">
                Search posts
                <svg viewBox="0 0 18 9" className="mb-px h-[9px] w-[18px]"><path d="M0 0H18L9 9Z" fill="#272c31" /></svg>
              </button>
            </div>

            <PostCard post={POSTS.gais} />
            <PostCard post={POSTS.frida} />
            <PostCard post={POSTS.simon} />
            <PostCard post={POSTS.max} />

            <button className="flex h-[76px] w-[66px] items-center justify-center rounded-lg bg-[#5a616a] pt-px text-[32px] text-white">1</button>
          </section>

          <aside className="w-[700px]">
            <div className="mb-5 h-[108px] rounded-lg border-2 border-[#d5d5d5] bg-white pt-5 text-center">
              <h5 className="text-[38.800px] leading-[48px] font-medium tracking-[-0.0125em]">Following</h5>
            </div>
            <div className="rounded-lg border-2 border-[#d5d5d5] bg-white px-10 pt-5 pb-5">
              <h5 className="mb-4 text-center text-[38.800px] leading-[48px] font-medium tracking-[-0.0154em]">Most liked posts</h5>
              <PostCard post={POSTS.simon} compact />
              <PostCard post={POSTS.gais} compact />
              <PostCard post={POSTS.max} compact />
              <PostCard post={POSTS.frida} compact />
            </div>
          </aside>
        </div>
      </main>
    </div>
  );
}
